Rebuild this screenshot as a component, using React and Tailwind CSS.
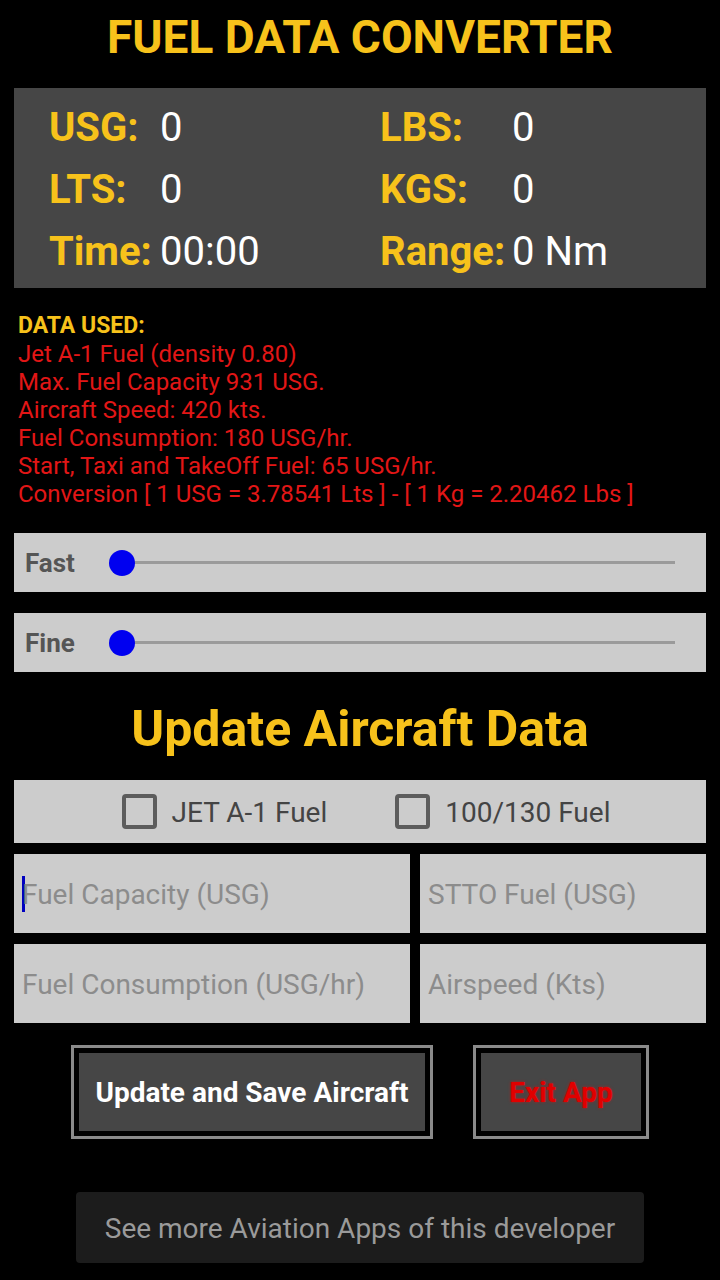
import React from "react";

const font = { fontFamily: "Roboto, 'Liberation Sans', sans-serif" };

function StatRow({ left, right }) {
  return (
    <div className="flex h-[62px] items-center">
      <div className="flex w-[366px] items-center pl-[35px]">
        <span className="w-[111px] font-bold text-[#f7c21b]">{left[0]}</span>
        <span className="text-white">{left[1]}</span>
      </div>
      <div className="flex items-center">
        <span className="w-[132px] font-bold text-[#f7c21b]">{right[0]}</span>
        <span className="text-white">{right[1]}</span>
      </div>
    </div>
  );
}

function SliderBox({ label }) {
  return (
    <div className="flex h-[59px] items-center bg-[#cccccc] pl-[11px]">
      <span className="w-[84px] pt-[2px] text-[26px] font-bold text-[#555555]">{label}</span>
      <div className="relative flex h-[26px] w-[566px] items-center">
        <div className="ml-[13px] h-[3px] w-[553px] bg-[#9a9a9a]" />
        <div className="absolute left-0 top-0 h-[26px] w-[26px] rounded-full bg-[#0000f0]" />
      </div>
    </div>
  );
}

function Checkbox({ label }) {
  return (
    <div className="flex items-center gap-[15px]">
      <div className="h-[35px] w-[35px] rounded-[4px] border-[4px] border-[#5c5c5c]" />
      <span className="pt-[2px] text-[28px] text-[#444444]">{label}</span>
    </div>
  );
}

export default function App() {
  return (
    <div className="min-h-[1280px] w-[720px] bg-black" style={font}>
      <div className="flex h-[88px] items-center justify-center pb-[14px]">
        <h1 className="text-[46px] font-bold leading-none text-[#f7c21b]">FUEL DATA CONVERTER</h1>
      </div>

      <div className="mx-[14px] h-[200px] bg-[#464646] pt-[9px] text-[40px] leading-none">
        <StatRow left={["USG:", "0"]} right={["LBS:", "0"]} />
        <StatRow left={["LTS:", "0"]} right={["KGS:", "0"]} />
        <StatRow left={["Time:", "00:00"]} right={["Range:", "0 Nm"]} />
      </div>

      <div className="mt-[24px] px-[18px] text-[24px] leading-[28px]">
        <div className="text-[23px] font-bold text-[#f7c21b]">DATA USED:</div>
        <div className="text-[#e21616]">
          <div>Jet A-1 Fuel (density 0.80)</div>
          <div>Max. Fuel Capacity 931 USG.</div>
          <div>Aircraft Speed: 420 kts.</div>
          <div>Fuel Consumption: 180 USG/hr.</div>
          <div>Start, Taxi and TakeOff Fuel: 65 USG/hr.</div>
          <div>Conversion [ 1 USG = 3.78541 Lts ] - [ 1 Kg = 2.20462 Lbs ]</div>
        </div>
      </div>

      <div className="mx-[14px] mt-[25px] flex flex-col gap-[21px]">
        <SliderBox label="Fast" />
        <SliderBox label="Fine" />
      </div>

      <div className="flex h-[108px] items-center justify-center pt-[5px]">
        <h2 className="text-[50px] font-bold leading-none text-[#f7c21b]">Update Aircraft Data</h2>
      </div>

      <div className="mx-[14px] flex h-[63px] items-center justify-center gap-[68px] bg-[#cccccc] pl-[12px]">
        <Checkbox label="JET A-1 Fuel" />
        <Checkbox label="100/130 Fuel" />
      </div>

      <div className="mx-[14px] mt-[11px] grid grid-cols-[396px_286px] gap-x-[10px] gap-y-[11px] text-[28px] text-[#8c8c8c]">
        <div className="flex h-[79px] items-center bg-[#cccccc] pl-[8px]">
          <span className="mr-[-3px] h-[36px] w-[3px] bg-[#0000c0]" />
          <span className="pt-[2px]">Fuel Capacity (USG)</span>
        </div>
        <div className="flex h-[79px] items-center bg-[#cccccc] pl-[8px] pt-[2px]">STTO Fuel (USG)</div>
        <div className="flex h-[79px] items-center bg-[#cccccc] pl-[8px] pt-[2px]">Fuel Consumption (USG/hr)</div>
        <div className="flex h-[79px] items-center bg-[#cccccc] pl-[8px] pt-[2px]">Airspeed (Kts)</div>
      </div>

      <div className="mt-[22px] flex pl-[71px]">
        <div className="h-[94px] w-[362px] border-[3px] border-[#8a8a8a] bg-black p-[5px]">
          <div className="flex h-full items-center justify-center bg-[#464646] pt-[2px] text-[28px] font-bold text-white">
            Update and Save Aircraft
          </div>
        </div>
        <div className="ml-[40px] h-[94px] w-[176px] border-[3px] border-[#8a8a8a] bg-black p-[5px]">
          <div className="flex h-full items-center justify-center bg-[#464646] pt-[2px] text-[28px] font-bold text-[#e00000] [text-shadow:0_0_3px_rgba(255,0,0,0.6)]">
            Exit App
          </div>
        </div>
      </div>

      <div className="mx-[76px] mt-[53px] flex h-[71px] items-center justify-center rounded-[4px] bg-[#1c1c1c] pt-[3px] text-[28px] text-[#9a9a9a]">
        See more Aviation Apps of this developer
      </div>
    </div>
  );
}
